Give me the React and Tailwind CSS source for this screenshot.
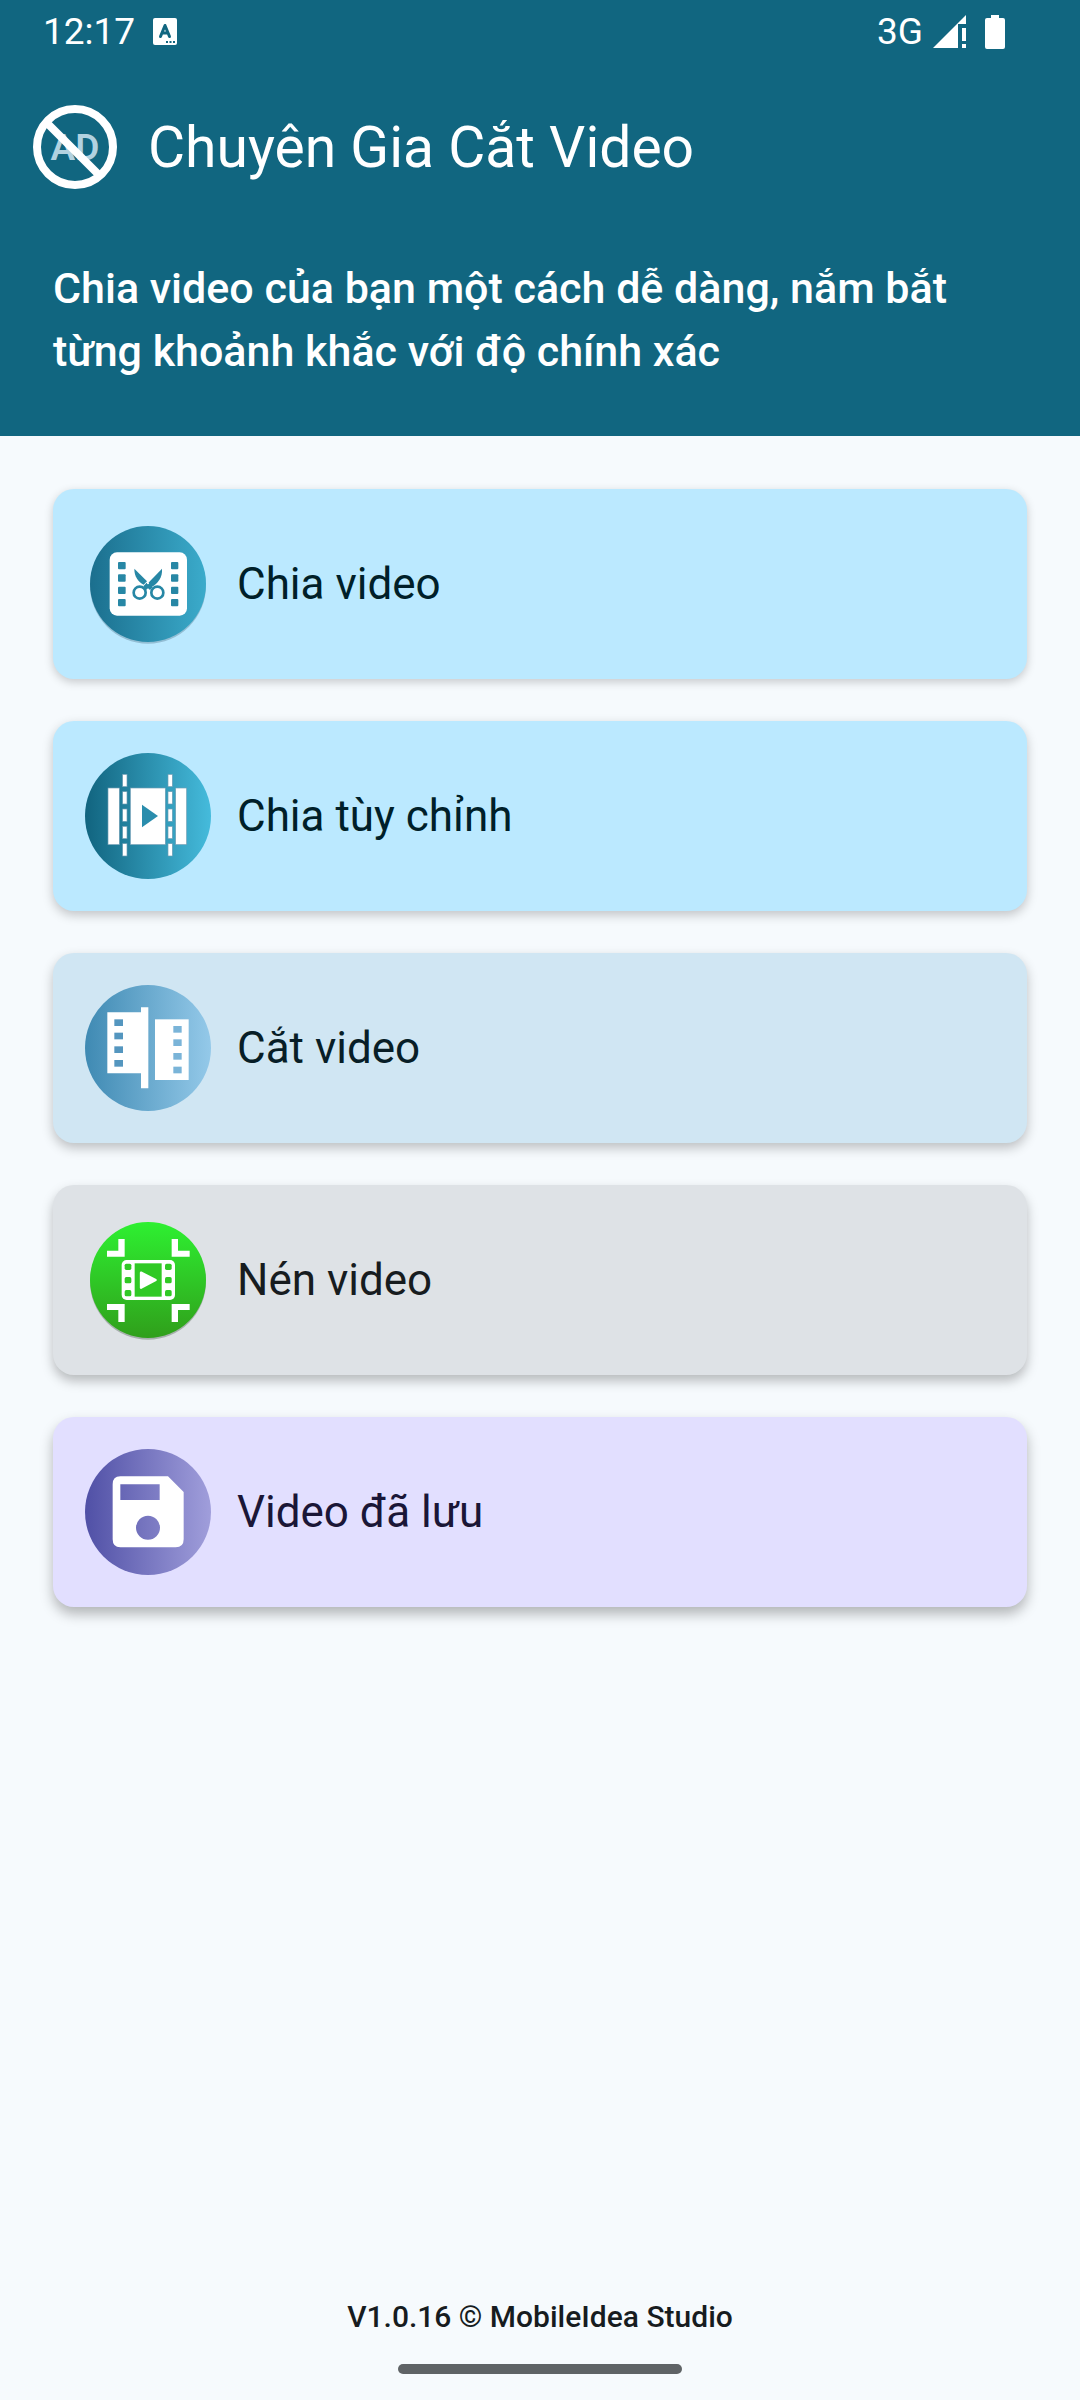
// App.jsx — Home screen of the video cutter

const SplitIcon = () => (
    <svg viewBox="0 0 378 378" className="size-[126px] shrink-0" aria-hidden="true">
        <defs>
            <linearGradient id="split">
                <stop offset="0" stopColor="#1b6f8e" />
                <stop offset="1" stopColor="#3babcb" />
            </linearGradient>
        </defs>
        <circle cx="189" cy="194" r="174" fill="#00263a" fillOpacity="0.22" />
        <circle cx="189" cy="189" r="174" fill="url(#split)" />
        <rect x="74" y="94" width="232" height="190" rx="22" fill="#fff" />
        <g fill="#2787a5">
            {[123, 160, 197, 234].map((y) => (
                <g key={y}>
                    <rect x="99" y={y} width="23" height="22" rx="3" />
                    <rect x="258" y={y} width="22" height="22" rx="3" />
                </g>
            ))}
            <path d="M148 143l38 38-10 10c-18-10-28-26-28-48z" />
            <path d="M231 143l-54 56h22c20-12 34-30 32-56z" />
            <path d="M175 196l10-11 18 14-8 8-6-5-7 6z" />
        </g>
        <circle cx="189" cy="187" r="3" fill="#fff" />
        <g fill="#fff" stroke="#2787a5" strokeWidth="8">
            <circle cx="164" cy="215" r="18" />
            <circle cx="217" cy="215" r="18" />
        </g>
    </svg>
);

const CustomSplitIcon = () => (
    <svg viewBox="0 0 378 378" className="size-[126px] shrink-0" aria-hidden="true">
        <defs>
            <linearGradient id="custom">
                <stop offset="0" stopColor="#11647f" />
                <stop offset="1" stopColor="#45bbdc" />
            </linearGradient>
        </defs>
        <circle cx="189" cy="189" r="189" fill="url(#custom)" />
        <g fill="#fff" stroke="#6d9db4" strokeWidth="2">
            <rect x="69" y="105" width="34" height="170" />
            <rect x="272" y="105" width="33" height="170" />
            <rect x="136" y="105" width="105" height="170" />
            {[64, 116, 168, 220, 272].map((y) => (
                <g key={y}>
                    <rect x="113" y={y} width="13" height="37" />
                    <rect x="249" y={y} width="13" height="37" />
                </g>
            ))}
        </g>
        <path d="M171 155l48 34-48 34z" fill="#2a8dad" />
    </svg>
);

const CutIcon = () => (
    <svg viewBox="0 0 378 378" className="size-[126px] shrink-0" aria-hidden="true">
        <defs>
            <linearGradient id="cut">
                <stop offset="0" stopColor="#3f8ab3" />
                <stop offset="1" stopColor="#94c9e9" />
            </linearGradient>
        </defs>
        <circle cx="189" cy="189" r="189" fill="url(#cut)" />
        <path d="M67 82h101V67h22v243h-22v-45H67z" fill="#fff" />
        <rect x="210" y="103" width="101" height="182" fill="#fff" />
        {[103, 143, 184, 225].map((y) => (
            <g key={y}>
                <rect x="88" y={y} width="26" height="20" fill="#5496bf" />
                <rect x="265" y={y + 20} width="25" height="20" fill="#7ab4d8" />
            </g>
        ))}
    </svg>
);

const CompressIcon = () => (
    <svg viewBox="0 0 378 378" className="size-[126px] shrink-0" aria-hidden="true">
        <defs>
            <linearGradient id="compress" x1="0" y1="0" x2="0" y2="1">
                <stop offset="0" stopColor="#2ef031" />
                <stop offset="1" stopColor="#309f1b" />
            </linearGradient>
        </defs>
        <circle cx="189" cy="194" r="174" fill="#001a00" fillOpacity="0.25" />
        <circle cx="189" cy="189" r="174" fill="url(#compress)" />
        <g fill="#fff">
            <path d="M100 66h19v53H66v-18h34z" />
            <path d="M260 66h19v35h35v18h-54z" />
            <path d="M66 261h53v54h-19v-36H66z" />
            <path d="M260 261h54v18h-35v36h-19z" />
            <rect x="110" y="129" width="160" height="120" rx="15" />
        </g>
        <g fill="#30c925">
            <rect x="149" y="139" width="81" height="100" />
            {[140, 180, 219].map((y) => (
                <g key={y}>
                    <rect x="119" y={y} width="20" height="19" rx="5" />
                    <rect x="240" y={y} width="20" height="19" rx="5" />
                </g>
            ))}
        </g>
        <path d="M168 167l44 22-44 23z" fill="#fff" stroke="#fff" strokeWidth="7" strokeLinejoin="round" />
    </svg>
);

const SavedIcon = () => (
    <svg viewBox="0 0 378 378" className="size-[126px] shrink-0" aria-hidden="true">
        <defs>
            <linearGradient id="saved">
                <stop offset="0" stopColor="#5050a6" />
                <stop offset="1" stopColor="#a09edb" />
            </linearGradient>
        </defs>
        <circle cx="189" cy="189" r="189" fill="url(#saved)" />
        <path
            fillRule="evenodd"
            fill="#fff"
            d="M106 82h143l47 47v142q0 24-24 24H106q-23 0-23-24V106q0-24 23-24zM106 106v47h118v-47zM189 200a36 36 0 1 0 0 72 36 36 0 1 0 0-72z"
        />
    </svg>
);

const actions = [
    {
        label: "Chia video",
        icon: SplitIcon,
        color: "bg-[#bbe9ff] text-[#001f29] shadow-[0_3px_10px_rgba(0,0,0,0.2)]",
    },
    {
        label: "Chia tùy chỉnh",
        icon: CustomSplitIcon,
        color: "bg-[#bbe9ff] text-[#001f29] shadow-[0_4px_11px_rgba(0,0,0,0.22)]",
    },
    {
        label: "Cắt video",
        icon: CutIcon,
        color: "bg-[#d0e6f3] text-[#081e27] shadow-[0_5px_12px_rgba(0,0,0,0.24)]",
    },
    {
        label: "Nén video",
        icon: CompressIcon,
        color: "bg-[#dee2e6] text-[#171c1f] shadow-[0_6px_12px_rgba(0,0,0,0.26)]",
    },
    {
        label: "Video đã lưu",
        icon: SavedIcon,
        color: "bg-[#e2dfff] text-[#1a1637] shadow-[0_7px_13px_rgba(0,0,0,0.28)]",
    },
];

function StatusBar() {
    return (
        <div className="flex h-[63px] items-center justify-between pl-[43px] pr-[75px] text-[37px] leading-none">
            <div className="flex items-center gap-[18px]">
                <span>12:17</span>
                <svg viewBox="0 0 24 27" className="h-[27px] w-6" aria-hidden="true">
                    <rect width="24" height="27" rx="2" fill="#fff" />
                    <path d="M7.500 18.500L12 7.500l4.500 11M9 15h6" fill="none" stroke="#116680" strokeWidth="3" strokeLinejoin="round" strokeLinecap="round" />
                    <path d="M13 23h2v2h-2zM16.500 23h2v2h-2zM20 23h2v2h-2z" fill="#116680" />
                </svg>
            </div>
            <div className="flex items-center">
                <span>3G</span>
                <svg viewBox="0 0 33 34" className="ml-2.5 h-[34px] w-[33px]" fill="#fff" aria-hidden="true">
                    <path d="M0 33L33 0v9h-8v24z" />
                    <path d="M29 13h4v13h-4zM29 29h4v4h-4z" />
                </svg>
                <svg viewBox="0 0 20 34" className="ml-[19px] h-[34px] w-5" fill="#fff" aria-hidden="true">
                    <path d="M6 0h8v3h4q2 0 2 2v27q0 2-2 2H2q-2 0-2-2V5q0-2 2-2h4z" />
                </svg>
            </div>
        </div>
    );
}

function NoAdsButton() {
    return (
        <button aria-label="AD" className="shrink-0">
            <svg viewBox="0 0 84 84" className="size-[84px]" aria-hidden="true">
                <text x="42" y="55" textAnchor="middle" fill="#b2d2e0" fontFamily="Roboto" fontSize="37" fontWeight="600">
                    AD
                </text>
                <path d="M14 18l52 52" stroke="#fff" strokeWidth="8" />
                <circle cx="42" cy="42" r="38" fill="none" stroke="#fff" strokeWidth="8" />
            </svg>
        </button>
    );
}

export default function App() {
    return (
        <div className="flex min-h-screen flex-col bg-[#f6fafd] font-['Roboto','Noto_Sans',sans-serif]">
            <header className="bg-[#116680] text-white">
                <StatusBar />
                <div className="flex h-[168px] items-center gap-[31px] px-[33px]">
                    <NoAdsButton />
                    <h1 className="text-[57px] leading-none">Chuyên Gia Cắt Video</h1>
                </div>
                <p className="px-[53px] pb-[53px] pt-[26px] text-[43px] font-medium leading-[63px]">
                    Chia video của bạn một cách dễ dàng, nắm bắt
                    <br />
                    từng khoảnh khắc với độ chính xác
                </p>
            </header>

            <main className="flex flex-col gap-[42px] p-[53px]">
                {actions.map(({ label, icon: Icon, color }) => (
                    <button
                        key={label}
                        className={`flex items-center gap-[26px] rounded-[21px] p-8 text-left text-[44px] leading-[63px] ${color}`}
                    >
                        <Icon />
                        {label}
                    </button>
                ))}
            </main>

            <footer className="mt-auto flex flex-col items-center gap-[26px] pb-[26px]">
                <p className="text-[30px] font-medium leading-[42px] text-[#171c1f]">V1.0.16 © MobileIdea Studio</p>
                <div className="h-2.5 w-[284px] rounded-full bg-[#5f6366]" />
            </footer>
        </div>
    );
}
